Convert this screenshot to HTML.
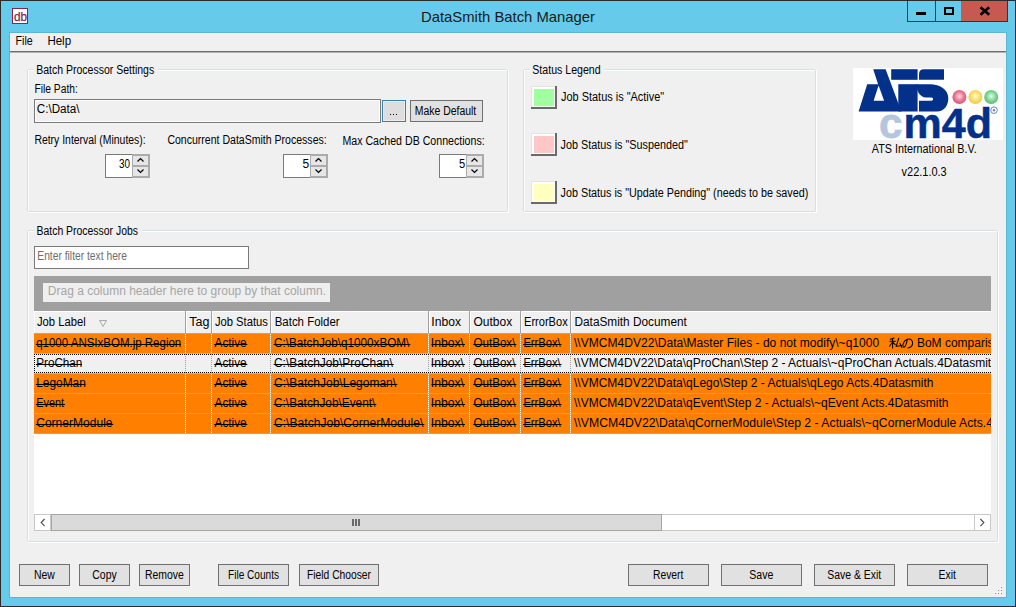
<!DOCTYPE html>
<html><head><meta charset="utf-8"><style>
html,body{margin:0;padding:0;overflow:hidden;background:#F0F0F0;}
svg{display:block;font-family:"Liberation Sans",sans-serif;}
</style></head><body>
<svg width="1016" height="607" viewBox="0 0 1016 607" shape-rendering="auto">
<rect x="0" y="0" width="1016" height="607" fill="#2B2B2B"/>
<rect x="1" y="1" width="1014" height="605" fill="#66CBEA"/>
<rect x="9" y="32" width="998" height="566" fill="#5BB6D6"/>
<rect x="10" y="33" width="996" height="564" fill="#F0F0F0"/>
<rect x="12" y="8" width="16" height="16" fill="#86264F"/>
<rect x="13" y="9" width="14" height="14" fill="#FFFFFF"/>
<rect x="907" y="1" width="101" height="21" fill="#3A3A3A"/>
<rect x="961" y="1" width="47" height="21" fill="#4E2824"/>
<rect x="908" y="1" width="27" height="20" fill="#66CBEA"/>
<rect x="936" y="1" width="25" height="20" fill="#66CBEA"/>
<rect x="961" y="1" width="46" height="20" fill="#C65A50"/>
<rect x="916" y="12" width="10" height="3" fill="#000"/>
<rect x="944" y="7" width="10" height="8" fill="#000"/>
<rect x="946" y="9" width="6" height="4" fill="#66CBEA"/>
<path d="M980.5 7.2 L989.2 14.8 M989.2 7.2 L980.5 14.8" stroke="#000" stroke-width="2.6"/>
<rect x="10" y="51" width="996" height="1" fill="#6E6E6E"/>
<rect x="10" y="52" width="996" height="1" fill="#B4B4B4"/>
<rect x="28" y="70" width="481" height="1" fill="#FFFFFF"/>
<rect x="28" y="212" width="481" height="1" fill="#FFFFFF"/>
<rect x="28" y="70" width="1" height="143" fill="#FFFFFF"/>
<rect x="508" y="70" width="1" height="143" fill="#FFFFFF"/>
<rect x="27" y="69" width="481" height="1" fill="#D5DFE5"/>
<rect x="27" y="211" width="481" height="1" fill="#D5DFE5"/>
<rect x="27" y="69" width="1" height="143" fill="#D5DFE5"/>
<rect x="507" y="69" width="1" height="143" fill="#D5DFE5"/>
<rect x="27" y="69" width="1" height="1" fill="#F0F0F0"/>
<rect x="507" y="69" width="1" height="1" fill="#F0F0F0"/>
<rect x="27" y="211" width="1" height="1" fill="#F0F0F0"/>
<rect x="507" y="211" width="1" height="1" fill="#F0F0F0"/>
<rect x="34" y="68" width="124" height="4" fill="#F0F0F0"/>
<rect x="34" y="99" width="347" height="24" fill="#7A7A7A"/>
<rect x="35" y="100" width="345" height="22" fill="#FFFFFF"/>
<rect x="36" y="101" width="343" height="20" fill="#F0F0F0"/>
<rect x="382" y="100" width="24" height="22" fill="#3C7FB1"/>
<rect x="383" y="101" width="22" height="20" fill="#ECECEC"/>
<rect x="384" y="102" width="20" height="18" fill="#DDDDDD"/>
<rect x="390" y="114" width="1" height="1" fill="#000"/>
<rect x="393" y="114" width="1" height="1" fill="#000"/>
<rect x="396" y="114" width="1" height="1" fill="#000"/>
<rect x="410" y="100" width="73" height="22" fill="#707070"/>
<rect x="411" y="101" width="71" height="20" fill="#E1E1E1"/>
<rect x="105" y="154" width="28" height="24" fill="#7A7A7A"/>
<rect x="106" y="155" width="26" height="22" fill="#FFFFFF"/>
<rect x="132" y="154" width="18" height="24" fill="#ABABAB"/>
<rect x="133" y="156" width="15" height="9" fill="#E6E6E6"/>
<rect x="133" y="167" width="15" height="9" fill="#E6E6E6"/>
<path d="M137.5 161.5 L140.5 158.5 L143.5 161.5 M137.5 169.5 L140.5 172.5 L143.5 169.5" stroke="#000" stroke-width="1.15" fill="none"/>
<rect x="283" y="154" width="28" height="24" fill="#7A7A7A"/>
<rect x="284" y="155" width="26" height="22" fill="#FFFFFF"/>
<rect x="310" y="154" width="18" height="24" fill="#ABABAB"/>
<rect x="311" y="156" width="15" height="9" fill="#E6E6E6"/>
<rect x="311" y="167" width="15" height="9" fill="#E6E6E6"/>
<path d="M315.5 161.5 L318.5 158.5 L321.5 161.5 M315.5 169.5 L318.5 172.5 L321.5 169.5" stroke="#000" stroke-width="1.15" fill="none"/>
<rect x="439" y="154" width="28" height="24" fill="#7A7A7A"/>
<rect x="440" y="155" width="26" height="22" fill="#FFFFFF"/>
<rect x="466" y="154" width="18" height="24" fill="#ABABAB"/>
<rect x="467" y="156" width="15" height="9" fill="#E6E6E6"/>
<rect x="467" y="167" width="15" height="9" fill="#E6E6E6"/>
<path d="M471.5 161.5 L474.5 158.5 L477.5 161.5 M471.5 169.5 L474.5 172.5 L477.5 169.5" stroke="#000" stroke-width="1.15" fill="none"/>
<rect x="524" y="70" width="293" height="1" fill="#FFFFFF"/>
<rect x="524" y="212" width="293" height="1" fill="#FFFFFF"/>
<rect x="524" y="70" width="1" height="143" fill="#FFFFFF"/>
<rect x="816" y="70" width="1" height="143" fill="#FFFFFF"/>
<rect x="523" y="69" width="293" height="1" fill="#D5DFE5"/>
<rect x="523" y="211" width="293" height="1" fill="#D5DFE5"/>
<rect x="523" y="69" width="1" height="143" fill="#D5DFE5"/>
<rect x="815" y="69" width="1" height="143" fill="#D5DFE5"/>
<rect x="523" y="69" width="1" height="1" fill="#F0F0F0"/>
<rect x="815" y="69" width="1" height="1" fill="#F0F0F0"/>
<rect x="523" y="211" width="1" height="1" fill="#F0F0F0"/>
<rect x="815" y="211" width="1" height="1" fill="#F0F0F0"/>
<rect x="530" y="68" width="74" height="4" fill="#F0F0F0"/>
<rect x="531" y="86" width="26" height="23" fill="#E3E3E3"/>
<rect x="532" y="87" width="23" height="20" fill="#FFFFFF"/>
<rect x="534" y="89" width="20" height="17" fill="#A0FFA0"/>
<rect x="555" y="86" width="2" height="23" fill="#6A6A6A"/>
<rect x="531" y="107" width="26" height="2" fill="#6A6A6A"/>
<rect x="531" y="133" width="26" height="23" fill="#E3E3E3"/>
<rect x="532" y="134" width="23" height="20" fill="#FFFFFF"/>
<rect x="534" y="136" width="20" height="17" fill="#FFC8C8"/>
<rect x="555" y="133" width="2" height="23" fill="#6A6A6A"/>
<rect x="531" y="154" width="26" height="2" fill="#6A6A6A"/>
<rect x="531" y="181" width="26" height="23" fill="#E3E3E3"/>
<rect x="532" y="182" width="23" height="20" fill="#FFFFFF"/>
<rect x="534" y="184" width="20" height="17" fill="#FFFFC0"/>
<rect x="555" y="181" width="2" height="23" fill="#6A6A6A"/>
<rect x="531" y="202" width="26" height="2" fill="#6A6A6A"/>
<rect x="853" y="68" width="150" height="72" fill="#FFFFFF"/>
<g fill="#03318A">
<path d="M873.2 69.2 L885.6 69.2 L901.4 111.5 L858.6 111.5 L867.2 84.3 L878.1 84.3 Z"/>
<path d="M898.3 84.2 L917.6 84.2 L917.6 111.5 L898.3 111.5 Z"/>
<rect x="891.2" y="69.2" width="26.4" height="10.6"/>
<path d="M924 69.2 L944 69.2 L944 79.8 L919 79.8 L919 74.2 Q919 69.2 924 69.2 Z"/>
<path d="M916.25 84.2 L929.3 84.2 C941 84.2 948.3 90 948.3 98 C948.3 106 944 111.5 937 111.5 L919 111.5 L919 100.8 L931.2 100.8 C933.8 100.8 933.8 97.6 931.2 97.6 L926 97.6 C920 96.8 916.6 91.5 916.25 84.2 Z"/>
</g>
<path d="M873.6 100.8 L884.1 100.8 L878.6 85.6 Z" fill="#FFFFFF"/>

<defs>
<radialGradient id="gp" cx="0.5" cy="0.45" r="0.55"><stop offset="0" stop-color="#FADCE4"/><stop offset="0.55" stop-color="#EC7E98"/><stop offset="1" stop-color="#DC5274"/></radialGradient>
<radialGradient id="gy" cx="0.5" cy="0.45" r="0.55"><stop offset="0" stop-color="#FFFBD8"/><stop offset="0.55" stop-color="#F8E070"/><stop offset="1" stop-color="#EECB3A"/></radialGradient>
<radialGradient id="gg" cx="0.5" cy="0.45" r="0.55"><stop offset="0" stop-color="#E6FAEA"/><stop offset="0.55" stop-color="#86D89A"/><stop offset="1" stop-color="#52BC6C"/></radialGradient>
</defs>
<circle cx="959.4" cy="97" r="7" fill="url(#gp)"/>
<circle cx="975.4" cy="97" r="7" fill="url(#gy)"/>
<circle cx="991.2" cy="97" r="7" fill="url(#gg)"/>

<circle cx="994" cy="110.2" r="3.3" fill="none" stroke="#6A86BE" stroke-width="1"/><circle cx="994" cy="110.2" r="1.2" fill="#6A86BE"/>
<rect x="28" y="231" width="971" height="1" fill="#FFFFFF"/>
<rect x="28" y="542" width="971" height="1" fill="#FFFFFF"/>
<rect x="28" y="231" width="1" height="312" fill="#FFFFFF"/>
<rect x="998" y="231" width="1" height="312" fill="#FFFFFF"/>
<rect x="27" y="230" width="971" height="1" fill="#D5DFE5"/>
<rect x="27" y="541" width="971" height="1" fill="#D5DFE5"/>
<rect x="27" y="230" width="1" height="312" fill="#D5DFE5"/>
<rect x="997" y="230" width="1" height="312" fill="#D5DFE5"/>
<rect x="27" y="230" width="1" height="1" fill="#F0F0F0"/>
<rect x="997" y="230" width="1" height="1" fill="#F0F0F0"/>
<rect x="27" y="541" width="1" height="1" fill="#F0F0F0"/>
<rect x="997" y="541" width="1" height="1" fill="#F0F0F0"/>
<rect x="34" y="229" width="108" height="4" fill="#F0F0F0"/>
<rect x="34" y="246" width="215" height="23" fill="#7A7A7A"/>
<rect x="35" y="247" width="213" height="21" fill="#FFFFFF"/>
<rect x="34" y="276" width="957" height="35" fill="#A0A0A0"/>
<rect x="43" y="283" width="287" height="19" fill="#EFEFEF"/>
<rect x="34" y="311" width="957" height="22" fill="#F0F0F0"/>
<rect x="34" y="311" width="957" height="1" fill="#FFFFFF"/>
<rect x="34" y="311" width="1" height="22" fill="#FFFFFF"/>
<rect x="185" y="311" width="1" height="22" fill="#A0A0A0"/>
<rect x="186" y="311" width="1" height="22" fill="#FFFFFF"/>
<rect x="211" y="311" width="1" height="22" fill="#A0A0A0"/>
<rect x="212" y="311" width="1" height="22" fill="#FFFFFF"/>
<rect x="270" y="311" width="1" height="22" fill="#A0A0A0"/>
<rect x="271" y="311" width="1" height="22" fill="#FFFFFF"/>
<rect x="428" y="311" width="1" height="22" fill="#A0A0A0"/>
<rect x="429" y="311" width="1" height="22" fill="#FFFFFF"/>
<rect x="469" y="311" width="1" height="22" fill="#A0A0A0"/>
<rect x="470" y="311" width="1" height="22" fill="#FFFFFF"/>
<rect x="520" y="311" width="1" height="22" fill="#A0A0A0"/>
<rect x="521" y="311" width="1" height="22" fill="#FFFFFF"/>
<rect x="570" y="311" width="1" height="22" fill="#A0A0A0"/>
<rect x="571" y="311" width="1" height="22" fill="#FFFFFF"/>
<rect x="34" y="333" width="957" height="1" fill="#A4AAB0"/>
<path d="M99.5 320.5 L106.5 320.5 L103 326.5 Z" fill="none" stroke="#A8A8A8" stroke-width="1"/>
<rect x="34" y="334" width="957" height="180" fill="#FFFFFF"/>
<defs><clipPath id="gc"><rect x="34" y="334" width="957" height="100"/></clipPath></defs>
<rect x="34" y="334" width="957" height="19" fill="#FF8000"/>
<rect x="34" y="353" width="957" height="1" fill="#B0B8C0"/>
<rect x="185" y="334" width="1" height="19" fill="#FFFFFF"/>
<line x1="185.5" y1="335" x2="185.5" y2="353" stroke="#B4B4B4" stroke-width="1" stroke-dasharray="1 1"/>
<rect x="211" y="334" width="1" height="19" fill="#FFFFFF"/>
<line x1="211.5" y1="335" x2="211.5" y2="353" stroke="#B4B4B4" stroke-width="1" stroke-dasharray="1 1"/>
<rect x="270" y="334" width="1" height="19" fill="#FFFFFF"/>
<line x1="270.5" y1="335" x2="270.5" y2="353" stroke="#B4B4B4" stroke-width="1" stroke-dasharray="1 1"/>
<rect x="428" y="334" width="1" height="19" fill="#FFFFFF"/>
<line x1="428.5" y1="335" x2="428.5" y2="353" stroke="#B4B4B4" stroke-width="1" stroke-dasharray="1 1"/>
<rect x="469" y="334" width="1" height="19" fill="#FFFFFF"/>
<line x1="469.5" y1="335" x2="469.5" y2="353" stroke="#B4B4B4" stroke-width="1" stroke-dasharray="1 1"/>
<rect x="520" y="334" width="1" height="19" fill="#FFFFFF"/>
<line x1="520.5" y1="335" x2="520.5" y2="353" stroke="#B4B4B4" stroke-width="1" stroke-dasharray="1 1"/>
<rect x="570" y="334" width="1" height="19" fill="#FFFFFF"/>
<line x1="570.5" y1="335" x2="570.5" y2="353" stroke="#B4B4B4" stroke-width="1" stroke-dasharray="1 1"/>
<rect x="34" y="354" width="957" height="19" fill="#F0F0F0"/>
<rect x="34" y="373" width="957" height="1" fill="#B0B8C0"/>
<line x1="185.5" y1="354" x2="185.5" y2="373" stroke="#A0A0A0" stroke-width="1" stroke-dasharray="1 1"/>
<line x1="211.5" y1="354" x2="211.5" y2="373" stroke="#A0A0A0" stroke-width="1" stroke-dasharray="1 1"/>
<line x1="270.5" y1="354" x2="270.5" y2="373" stroke="#A0A0A0" stroke-width="1" stroke-dasharray="1 1"/>
<line x1="428.5" y1="354" x2="428.5" y2="373" stroke="#A0A0A0" stroke-width="1" stroke-dasharray="1 1"/>
<line x1="469.5" y1="354" x2="469.5" y2="373" stroke="#A0A0A0" stroke-width="1" stroke-dasharray="1 1"/>
<line x1="520.5" y1="354" x2="520.5" y2="373" stroke="#A0A0A0" stroke-width="1" stroke-dasharray="1 1"/>
<line x1="570.5" y1="354" x2="570.5" y2="373" stroke="#A0A0A0" stroke-width="1" stroke-dasharray="1 1"/>
<rect x="34" y="374" width="957" height="19" fill="#FF8000"/>
<rect x="34" y="393" width="957" height="1" fill="#A8A8A8"/>
<rect x="185" y="374" width="1" height="19" fill="#FFFFFF"/>
<line x1="185.5" y1="375" x2="185.5" y2="393" stroke="#B4B4B4" stroke-width="1" stroke-dasharray="1 1"/>
<rect x="211" y="374" width="1" height="19" fill="#FFFFFF"/>
<line x1="211.5" y1="375" x2="211.5" y2="393" stroke="#B4B4B4" stroke-width="1" stroke-dasharray="1 1"/>
<rect x="270" y="374" width="1" height="19" fill="#FFFFFF"/>
<line x1="270.5" y1="375" x2="270.5" y2="393" stroke="#B4B4B4" stroke-width="1" stroke-dasharray="1 1"/>
<rect x="428" y="374" width="1" height="19" fill="#FFFFFF"/>
<line x1="428.5" y1="375" x2="428.5" y2="393" stroke="#B4B4B4" stroke-width="1" stroke-dasharray="1 1"/>
<rect x="469" y="374" width="1" height="19" fill="#FFFFFF"/>
<line x1="469.5" y1="375" x2="469.5" y2="393" stroke="#B4B4B4" stroke-width="1" stroke-dasharray="1 1"/>
<rect x="520" y="374" width="1" height="19" fill="#FFFFFF"/>
<line x1="520.5" y1="375" x2="520.5" y2="393" stroke="#B4B4B4" stroke-width="1" stroke-dasharray="1 1"/>
<rect x="570" y="374" width="1" height="19" fill="#FFFFFF"/>
<line x1="570.5" y1="375" x2="570.5" y2="393" stroke="#B4B4B4" stroke-width="1" stroke-dasharray="1 1"/>
<rect x="34" y="394" width="957" height="19" fill="#FF8000"/>
<rect x="34" y="413" width="957" height="1" fill="#A8A8A8"/>
<rect x="185" y="394" width="1" height="19" fill="#FFFFFF"/>
<line x1="185.5" y1="395" x2="185.5" y2="413" stroke="#B4B4B4" stroke-width="1" stroke-dasharray="1 1"/>
<rect x="211" y="394" width="1" height="19" fill="#FFFFFF"/>
<line x1="211.5" y1="395" x2="211.5" y2="413" stroke="#B4B4B4" stroke-width="1" stroke-dasharray="1 1"/>
<rect x="270" y="394" width="1" height="19" fill="#FFFFFF"/>
<line x1="270.5" y1="395" x2="270.5" y2="413" stroke="#B4B4B4" stroke-width="1" stroke-dasharray="1 1"/>
<rect x="428" y="394" width="1" height="19" fill="#FFFFFF"/>
<line x1="428.5" y1="395" x2="428.5" y2="413" stroke="#B4B4B4" stroke-width="1" stroke-dasharray="1 1"/>
<rect x="469" y="394" width="1" height="19" fill="#FFFFFF"/>
<line x1="469.5" y1="395" x2="469.5" y2="413" stroke="#B4B4B4" stroke-width="1" stroke-dasharray="1 1"/>
<rect x="520" y="394" width="1" height="19" fill="#FFFFFF"/>
<line x1="520.5" y1="395" x2="520.5" y2="413" stroke="#B4B4B4" stroke-width="1" stroke-dasharray="1 1"/>
<rect x="570" y="394" width="1" height="19" fill="#FFFFFF"/>
<line x1="570.5" y1="395" x2="570.5" y2="413" stroke="#B4B4B4" stroke-width="1" stroke-dasharray="1 1"/>
<rect x="34" y="414" width="957" height="19" fill="#FF8000"/>
<rect x="34" y="433" width="957" height="1" fill="#A8A8A8"/>
<rect x="185" y="414" width="1" height="19" fill="#FFFFFF"/>
<line x1="185.5" y1="415" x2="185.5" y2="433" stroke="#B4B4B4" stroke-width="1" stroke-dasharray="1 1"/>
<rect x="211" y="414" width="1" height="19" fill="#FFFFFF"/>
<line x1="211.5" y1="415" x2="211.5" y2="433" stroke="#B4B4B4" stroke-width="1" stroke-dasharray="1 1"/>
<rect x="270" y="414" width="1" height="19" fill="#FFFFFF"/>
<line x1="270.5" y1="415" x2="270.5" y2="433" stroke="#B4B4B4" stroke-width="1" stroke-dasharray="1 1"/>
<rect x="428" y="414" width="1" height="19" fill="#FFFFFF"/>
<line x1="428.5" y1="415" x2="428.5" y2="433" stroke="#B4B4B4" stroke-width="1" stroke-dasharray="1 1"/>
<rect x="469" y="414" width="1" height="19" fill="#FFFFFF"/>
<line x1="469.5" y1="415" x2="469.5" y2="433" stroke="#B4B4B4" stroke-width="1" stroke-dasharray="1 1"/>
<rect x="520" y="414" width="1" height="19" fill="#FFFFFF"/>
<line x1="520.5" y1="415" x2="520.5" y2="433" stroke="#B4B4B4" stroke-width="1" stroke-dasharray="1 1"/>
<rect x="570" y="414" width="1" height="19" fill="#FFFFFF"/>
<line x1="570.5" y1="415" x2="570.5" y2="433" stroke="#B4B4B4" stroke-width="1" stroke-dasharray="1 1"/>
<g stroke="#000" stroke-width="1.05" fill="none" stroke-linecap="round"><path d="M894 338 L890.3 339.3 M889.8 341.2 L895.3 341.2 M892.6 338.8 L892.6 348 M892.4 342.2 L889.6 346.2 M892.9 342.3 L895.2 344.6"/><path d="M898.8 338.2 L896.2 346.4 L901.6 345.4 M899.9 343.2 L901.9 347.6"/><path d="M907.4 339.2 C906.6 343.5 905.3 347.2 903.8 347.2 C902.2 347.2 902.4 341.2 907.2 339.3 C910.6 338.2 913 340.6 912.6 343.6 C912.2 346.2 910.4 347.6 907.8 347.9"/></g>
<line x1="34" y1="354.5" x2="991" y2="354.5" stroke="#000" stroke-width="1" stroke-dasharray="1 1"/>
<line x1="34" y1="372.5" x2="991" y2="372.5" stroke="#000" stroke-width="1" stroke-dasharray="1 1"/>
<line x1="34.5" y1="354" x2="34.5" y2="373" stroke="#000" stroke-width="1" stroke-dasharray="1 1"/>
<rect x="34" y="514" width="957" height="17" fill="#FFFFFF"/>
<rect x="34" y="514" width="957" height="1" fill="#C8C8C8"/>
<rect x="34" y="530" width="957" height="1" fill="#C8C8C8"/>
<rect x="34" y="514" width="17" height="17" fill="#C8C8C8"/>
<rect x="35" y="515" width="15" height="15" fill="#FFFFFF"/>
<rect x="974" y="514" width="17" height="17" fill="#C8C8C8"/>
<rect x="975" y="515" width="15" height="15" fill="#FFFFFF"/>
<rect x="51" y="514" width="611" height="17" fill="#A6A6A6"/>
<rect x="52" y="515" width="609" height="15" fill="#DADADA"/>
<rect x="352" y="519" width="2" height="7" fill="#6A6A6A"/>
<rect x="355" y="519" width="2" height="7" fill="#6A6A6A"/>
<rect x="358" y="519" width="2" height="7" fill="#6A6A6A"/>
<path d="M44.6 519 L41.2 522.6 L44.6 526.2" stroke="#505050" stroke-width="1.2" fill="none"/>
<path d="M980.4 519 L983.8 522.6 L980.4 526.2" stroke="#505050" stroke-width="1.2" fill="none"/>
<rect x="19" y="564" width="51" height="22" fill="#707070"/>
<rect x="20" y="565" width="49" height="20" fill="#E1E1E1"/>
<rect x="79" y="564" width="51" height="22" fill="#707070"/>
<rect x="80" y="565" width="49" height="20" fill="#E1E1E1"/>
<rect x="139" y="564" width="51" height="22" fill="#707070"/>
<rect x="140" y="565" width="49" height="20" fill="#E1E1E1"/>
<rect x="218" y="564" width="71" height="22" fill="#707070"/>
<rect x="219" y="565" width="69" height="20" fill="#E1E1E1"/>
<rect x="299" y="564" width="80" height="22" fill="#707070"/>
<rect x="300" y="565" width="78" height="20" fill="#E1E1E1"/>
<rect x="628" y="564" width="81" height="22" fill="#707070"/>
<rect x="629" y="565" width="79" height="20" fill="#E1E1E1"/>
<rect x="721" y="564" width="81" height="22" fill="#707070"/>
<rect x="722" y="565" width="79" height="20" fill="#E1E1E1"/>
<rect x="814" y="564" width="81" height="22" fill="#707070"/>
<rect x="815" y="565" width="79" height="20" fill="#E1E1E1"/>
<rect x="907" y="564" width="81" height="22" fill="#707070"/>
<rect x="908" y="565" width="79" height="20" fill="#E1E1E1"/>
<rect x="1000" y="586" width="1" height="1" fill="#FFFFFF"/>
<rect x="1001" y="587" width="1" height="1" fill="#8C8C8C"/>
<rect x="997" y="589" width="1" height="1" fill="#FFFFFF"/>
<rect x="998" y="590" width="1" height="1" fill="#8C8C8C"/>
<rect x="1000" y="589" width="1" height="1" fill="#FFFFFF"/>
<rect x="1001" y="590" width="1" height="1" fill="#8C8C8C"/>
<rect x="994" y="592" width="1" height="1" fill="#FFFFFF"/>
<rect x="995" y="593" width="1" height="1" fill="#8C8C8C"/>
<rect x="997" y="592" width="1" height="1" fill="#FFFFFF"/>
<rect x="998" y="593" width="1" height="1" fill="#8C8C8C"/>
<rect x="1000" y="592" width="1" height="1" fill="#FFFFFF"/>
<rect x="1001" y="593" width="1" height="1" fill="#8C8C8C"/>
<text x="13.90" y="21" font-size="13" fill="#7F1F4A" textLength="13.01" lengthAdjust="spacingAndGlyphs" stroke="#7F1F4A" stroke-width="0.25">db</text>
<text x="421.01" y="22" font-size="15" fill="#1A1A1A" textLength="173.98" lengthAdjust="spacingAndGlyphs">DataSmith Batch Manager</text>
<text x="15.50" y="45" font-size="12" fill="#000" textLength="17.21" lengthAdjust="spacingAndGlyphs">File</text>
<text x="47.40" y="45" font-size="12" fill="#000" textLength="23.69" lengthAdjust="spacingAndGlyphs">Help</text>
<text x="36.20" y="74" font-size="12" fill="#000" textLength="118.00" lengthAdjust="spacingAndGlyphs">Batch Processor Settings</text>
<text x="34.50" y="93" font-size="12" fill="#000" textLength="43.29" lengthAdjust="spacingAndGlyphs">File Path:</text>
<text x="36.80" y="113" font-size="12" fill="#000" textLength="42.75" lengthAdjust="spacingAndGlyphs">C:\Data\</text>
<text x="414.80" y="115" font-size="12" fill="#000" textLength="61.42" lengthAdjust="spacingAndGlyphs">Make Default</text>
<text x="34.40" y="144" font-size="12" fill="#000" textLength="111.29" lengthAdjust="spacingAndGlyphs">Retry Interval (Minutes):</text>
<text x="167.40" y="144" font-size="12" fill="#000" textLength="159.29" lengthAdjust="spacingAndGlyphs">Concurrent DataSmith Processes:</text>
<text x="342.40" y="145" font-size="12" fill="#000" textLength="142.30" lengthAdjust="spacingAndGlyphs">Max Cached DB Connections:</text>
<text x="119.10" y="168" font-size="12" fill="#000" textLength="11.03" lengthAdjust="spacingAndGlyphs">30</text>
<text x="302.60" y="168" font-size="12" fill="#000">5</text>
<text x="459.00" y="168" font-size="12" fill="#000" textLength="6.20" lengthAdjust="spacingAndGlyphs">5</text>
<text x="532.30" y="74" font-size="12" fill="#000" textLength="68.29" lengthAdjust="spacingAndGlyphs">Status Legend</text>
<text x="561.00" y="101" font-size="12" fill="#000" textLength="103.24" lengthAdjust="spacingAndGlyphs">Job Status is &quot;Active&quot;</text>
<text x="560.60" y="149" font-size="12" fill="#000" textLength="127.23" lengthAdjust="spacingAndGlyphs">Job Status is &quot;Suspended&quot;</text>
<text x="560.60" y="197" font-size="12" fill="#000" textLength="247.70" lengthAdjust="spacingAndGlyphs">Job Status is &quot;Update Pending&quot; (needs to be saved)</text>
<text x="878.92" y="138.3" font-size="43" fill="#B4C6DE" font-weight="bold" textLength="23.48" lengthAdjust="spacingAndGlyphs" stroke="#B4C6DE" stroke-width="0.8">c</text>
<text x="903.50" y="138.3" font-size="43" fill="#03318A" font-weight="bold" stroke="#03318A" stroke-width="0.5">m4d</text>
<text x="871.80" y="153" font-size="12" fill="#000" textLength="104.90" lengthAdjust="spacingAndGlyphs">ATS International B.V.</text>
<text x="901.60" y="176" font-size="12" fill="#000" textLength="45.10" lengthAdjust="spacingAndGlyphs">v22.1.0.3</text>
<text x="36.50" y="235" font-size="12" fill="#000" textLength="101.50" lengthAdjust="spacingAndGlyphs">Batch Processor Jobs</text>
<text x="37.30" y="260" font-size="12" fill="#6D6D6D" textLength="89.72" lengthAdjust="spacingAndGlyphs">Enter filter text here</text>
<text x="47.80" y="295" font-size="12" fill="#A6A6A6">Drag a column header here to group by that column.</text>
<text x="37.00" y="326" font-size="12" fill="#000" textLength="48.62" lengthAdjust="spacingAndGlyphs">Job Label</text>
<text x="189.30" y="326" font-size="12" fill="#000" textLength="20.20" lengthAdjust="spacingAndGlyphs">Tag</text>
<text x="214.90" y="326" font-size="12" fill="#000" textLength="53.00" lengthAdjust="spacingAndGlyphs">Job Status</text>
<text x="274.70" y="326" font-size="12" fill="#000" textLength="65.00" lengthAdjust="spacingAndGlyphs">Batch Folder</text>
<text x="431.39" y="326" font-size="12" fill="#000" textLength="29.71" lengthAdjust="spacingAndGlyphs">Inbox</text>
<text x="473.50" y="326" font-size="12" fill="#000">Outbox</text>
<text x="524.00" y="326" font-size="12" fill="#000" textLength="43.70" lengthAdjust="spacingAndGlyphs">ErrorBox</text>
<text x="574.50" y="326" font-size="12" fill="#000" textLength="112.34" lengthAdjust="spacingAndGlyphs">DataSmith Document</text>
<text x="36.20" y="347" font-size="12" fill="#000" textLength="145.04" lengthAdjust="spacingAndGlyphs">q1000 ANSIxBOM.jp Region</text>
<rect x="35.9" y="344" width="145.0" height="1" fill="#000"/>
<text x="214.50" y="347" font-size="12" fill="#000" textLength="32.18" lengthAdjust="spacingAndGlyphs">Active</text>
<rect x="214.2" y="344" width="33.1" height="1" fill="#000"/>
<text x="274.00" y="347" font-size="12" fill="#000" textLength="135.35" lengthAdjust="spacingAndGlyphs">C:\BatchJob\q1000xBOM\</text>
<rect x="273.7" y="344" width="136.6" height="1" fill="#000"/>
<text x="430.79" y="347" font-size="12" fill="#000" textLength="33.14" lengthAdjust="spacingAndGlyphs">Inbox\</text>
<rect x="431.5" y="344" width="33.4" height="1" fill="#000"/>
<text x="473.50" y="347" font-size="12" fill="#000" textLength="41.86" lengthAdjust="spacingAndGlyphs">OutBox\</text>
<rect x="473.2" y="344" width="43.1" height="1" fill="#000"/>
<text x="523.40" y="347" font-size="12" fill="#000" textLength="37.18" lengthAdjust="spacingAndGlyphs">ErrBox\</text>
<rect x="523.1" y="344" width="38.4" height="1" fill="#000"/>
<text x="574.00" y="347" font-size="12" fill="#000" textLength="305.17" lengthAdjust="spacingAndGlyphs" clip-path="url(#gc)">\\VMCM4DV22\Data\Master Files - do not modify\~q1000</text>
<text x="36.20" y="367" font-size="12" fill="#000" textLength="46.16" lengthAdjust="spacingAndGlyphs">ProChan</text>
<rect x="35.9" y="364" width="46.1" height="1" fill="#000"/>
<text x="214.50" y="367" font-size="12" fill="#000" textLength="32.18" lengthAdjust="spacingAndGlyphs">Active</text>
<rect x="214.2" y="364" width="33.1" height="1" fill="#000"/>
<text x="274.00" y="367" font-size="12" fill="#000" textLength="118.74" lengthAdjust="spacingAndGlyphs">C:\BatchJob\ProChan\</text>
<rect x="273.7" y="364" width="120.0" height="1" fill="#000"/>
<text x="430.79" y="367" font-size="12" fill="#000" textLength="33.14" lengthAdjust="spacingAndGlyphs">Inbox\</text>
<rect x="431.5" y="364" width="33.4" height="1" fill="#000"/>
<text x="473.50" y="367" font-size="12" fill="#000" textLength="41.86" lengthAdjust="spacingAndGlyphs">OutBox\</text>
<rect x="473.2" y="364" width="43.1" height="1" fill="#000"/>
<text x="523.40" y="367" font-size="12" fill="#000" textLength="37.18" lengthAdjust="spacingAndGlyphs">ErrBox\</text>
<rect x="523.1" y="364" width="38.4" height="1" fill="#000"/>
<text x="574.00" y="367" font-size="12" fill="#000" clip-path="url(#gc)">\\VMCM4DV22\Data\qProChan\Step 2 - Actuals\~qProChan Actuals.4Datasmith</text>
<text x="36.20" y="387" font-size="12" fill="#000" textLength="49.67" lengthAdjust="spacingAndGlyphs">LegoMan</text>
<rect x="35.9" y="384" width="49.6" height="1" fill="#000"/>
<text x="214.50" y="387" font-size="12" fill="#000" textLength="32.18" lengthAdjust="spacingAndGlyphs">Active</text>
<rect x="214.2" y="384" width="33.1" height="1" fill="#000"/>
<text x="274.00" y="387" font-size="12" fill="#000">C:\BatchJob\Legoman\</text>
<rect x="273.7" y="384" width="123.6" height="1" fill="#000"/>
<text x="430.79" y="387" font-size="12" fill="#000" textLength="33.14" lengthAdjust="spacingAndGlyphs">Inbox\</text>
<rect x="431.5" y="384" width="33.4" height="1" fill="#000"/>
<text x="473.50" y="387" font-size="12" fill="#000" textLength="41.86" lengthAdjust="spacingAndGlyphs">OutBox\</text>
<rect x="473.2" y="384" width="43.1" height="1" fill="#000"/>
<text x="523.40" y="387" font-size="12" fill="#000" textLength="37.18" lengthAdjust="spacingAndGlyphs">ErrBox\</text>
<rect x="523.1" y="384" width="38.4" height="1" fill="#000"/>
<text x="574.00" y="387" font-size="12" fill="#000" clip-path="url(#gc)">\\VMCM4DV22\Data\qLego\Step 2 - Actuals\qLego Acts.4Datasmith</text>
<text x="36.20" y="407" font-size="12" fill="#000" textLength="27.89" lengthAdjust="spacingAndGlyphs">Event</text>
<rect x="35.9" y="404" width="29.1" height="1" fill="#000"/>
<text x="214.50" y="407" font-size="12" fill="#000" textLength="32.18" lengthAdjust="spacingAndGlyphs">Active</text>
<rect x="214.2" y="404" width="33.1" height="1" fill="#000"/>
<text x="274.00" y="407" font-size="12" fill="#000" textLength="101.34" lengthAdjust="spacingAndGlyphs">C:\BatchJob\Event\</text>
<rect x="273.7" y="404" width="102.6" height="1" fill="#000"/>
<text x="430.79" y="407" font-size="12" fill="#000" textLength="33.14" lengthAdjust="spacingAndGlyphs">Inbox\</text>
<rect x="431.5" y="404" width="33.4" height="1" fill="#000"/>
<text x="473.50" y="407" font-size="12" fill="#000" textLength="41.86" lengthAdjust="spacingAndGlyphs">OutBox\</text>
<rect x="473.2" y="404" width="43.1" height="1" fill="#000"/>
<text x="523.40" y="407" font-size="12" fill="#000" textLength="37.18" lengthAdjust="spacingAndGlyphs">ErrBox\</text>
<rect x="523.1" y="404" width="38.4" height="1" fill="#000"/>
<text x="574.00" y="407" font-size="12" fill="#000" clip-path="url(#gc)">\\VMCM4DV22\Data\qEvent\Step 2 - Actuals\~qEvent Acts.4Datasmith</text>
<text x="36.20" y="427" font-size="12" fill="#000" textLength="76.37" lengthAdjust="spacingAndGlyphs">CornerModule</text>
<rect x="35.9" y="424" width="77.3" height="1" fill="#000"/>
<text x="214.50" y="427" font-size="12" fill="#000" textLength="32.18" lengthAdjust="spacingAndGlyphs">Active</text>
<rect x="214.2" y="424" width="33.1" height="1" fill="#000"/>
<text x="274.00" y="427" font-size="12" fill="#000" textLength="149.33" lengthAdjust="spacingAndGlyphs">C:\BatchJob\CornerModule\</text>
<rect x="273.7" y="424" width="150.6" height="1" fill="#000"/>
<text x="430.79" y="427" font-size="12" fill="#000" textLength="33.14" lengthAdjust="spacingAndGlyphs">Inbox\</text>
<rect x="431.5" y="424" width="33.4" height="1" fill="#000"/>
<text x="473.50" y="427" font-size="12" fill="#000" textLength="41.86" lengthAdjust="spacingAndGlyphs">OutBox\</text>
<rect x="473.2" y="424" width="43.1" height="1" fill="#000"/>
<text x="523.40" y="427" font-size="12" fill="#000" textLength="37.18" lengthAdjust="spacingAndGlyphs">ErrBox\</text>
<rect x="523.1" y="424" width="38.4" height="1" fill="#000"/>
<text x="574.00" y="427" font-size="12" fill="#000" textLength="474.01" lengthAdjust="spacingAndGlyphs" clip-path="url(#gc)">\\VMCM4DV22\Data\qCornerModule\Step 2 - Actuals\~qCornerModule Acts.4Datasmith</text>
<text x="916.90" y="347" font-size="12" fill="#000" clip-path="url(#gc)">BoM comparison</text>
<text x="33.91" y="579" font-size="12" fill="#000" textLength="20.89" lengthAdjust="spacingAndGlyphs">New</text>
<text x="92.31" y="579" font-size="12" fill="#000" textLength="24.37" lengthAdjust="spacingAndGlyphs">Copy</text>
<text x="144.92" y="579" font-size="12" fill="#000" textLength="38.87" lengthAdjust="spacingAndGlyphs">Remove</text>
<text x="228.00" y="579" font-size="12" fill="#000" textLength="51.00" lengthAdjust="spacingAndGlyphs">File Counts</text>
<text x="307.00" y="579" font-size="12" fill="#000" textLength="64.00" lengthAdjust="spacingAndGlyphs">Field Chooser</text>
<text x="653.00" y="579" font-size="12" fill="#000" textLength="30.43" lengthAdjust="spacingAndGlyphs">Revert</text>
<text x="749.30" y="579" font-size="12" fill="#000" textLength="24.11" lengthAdjust="spacingAndGlyphs">Save</text>
<text x="827.23" y="579" font-size="12" fill="#000" textLength="53.96" lengthAdjust="spacingAndGlyphs">Save &amp; Exit</text>
<text x="938.51" y="579" font-size="12" fill="#000" textLength="17.40" lengthAdjust="spacingAndGlyphs">Exit</text>
</svg></body></html>
